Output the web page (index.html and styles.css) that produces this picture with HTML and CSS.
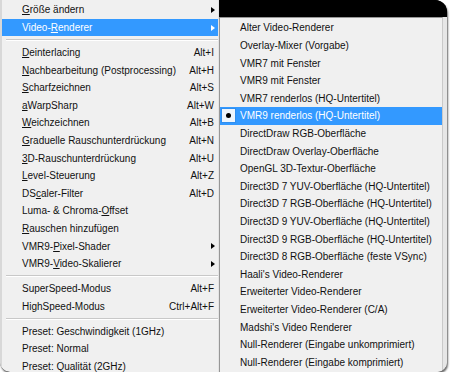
FILE: index.html
```html
<!DOCTYPE html>
<html lang="de">
<head>
<meta charset="utf-8">
<title>Menü</title>
<link rel="stylesheet" href="styles.css">
</head>
<body>
<div class="frame">
  <div class="menu">
    <div class="item"><span class="label"><u>G</u>röße ändern</span><span class="arrow"></span></div>
    <div class="item hl"><span class="label">Video-<u>R</u>enderer</span><span class="arrow"></span></div>
    <div class="sep"></div>
    <div class="item"><span class="label"><u>D</u>einterlacing</span><span class="key">Alt+I</span></div>
    <div class="item"><span class="label"><u>N</u>achbearbeitung (Postprocessing)</span><span class="key">Alt+H</span></div>
    <div class="item"><span class="label"><u>S</u>charfzeichnen</span><span class="key">Alt+S</span></div>
    <div class="item"><span class="label"><u>a</u>WarpSharp</span><span class="key">Alt+W</span></div>
    <div class="item"><span class="label"><u>W</u>eichzeichnen</span><span class="key">Alt+B</span></div>
    <div class="item"><span class="label"><u>G</u>raduelle Rauschunterdrückung</span><span class="key">Alt+N</span></div>
    <div class="item"><span class="label"><u>3</u>D-Rauschunterdrückung</span><span class="key">Alt+U</span></div>
    <div class="item"><span class="label"><u>L</u>evel-Steuerung</span><span class="key">Alt+Z</span></div>
    <div class="item"><span class="label">DS<u>c</u>aler-Filter</span><span class="key">Alt+D</span></div>
    <div class="item"><span class="label">Luma- &amp; Chroma-<u>O</u>ffset</span></div>
    <div class="item"><span class="label"><u>R</u>auschen hinzufügen</span></div>
    <div class="item"><span class="label">VMR9-<u>P</u>ixel-Shader</span><span class="arrow"></span></div>
    <div class="item"><span class="label">VMR9-<u>V</u>ideo-Skalierer</span><span class="arrow"></span></div>
    <div class="sep"></div>
    <div class="item"><span class="label">SuperSpeed-Modus</span><span class="key">Alt+F</span></div>
    <div class="item"><span class="label">HighSpeed-Modus</span><span class="key">Ctrl+Alt+F</span></div>
    <div class="sep"></div>
    <div class="item"><span class="label">Preset: Geschwindigkeit (1GHz)</span></div>
    <div class="item"><span class="label">Preset: Normal</span></div>
    <div class="item"><span class="label">Preset: Qualität (2GHz)</span></div>
  </div>
  <div class="side">
    <div class="backdrop"></div>
    <div class="subwrap">
      <div class="submenu">
        <div class="sitem"><span class="chk"></span><span>Alter Video-Renderer</span></div>
        <div class="sitem"><span class="chk"></span><span>Overlay-Mixer (Vorgabe)</span></div>
        <div class="sitem"><span class="chk"></span><span>VMR7 mit Fenster</span></div>
        <div class="sitem"><span class="chk"></span><span>VMR9 mit Fenster</span></div>
        <div class="sitem"><span class="chk"></span><span>VMR7 renderlos (HQ-Untertitel)</span></div>
        <div class="sitem hl"><span class="chk on"></span><span>VMR9 renderlos (HQ-Untertitel)</span></div>
        <div class="sitem"><span class="chk"></span><span>DirectDraw RGB-Oberfläche</span></div>
        <div class="sitem"><span class="chk"></span><span>DirectDraw Overlay-Oberfläche</span></div>
        <div class="sitem"><span class="chk"></span><span>OpenGL 3D-Textur-Oberfläche</span></div>
        <div class="sitem"><span class="chk"></span><span>Direct3D 7 YUV-Oberfläche (HQ-Untertitel)</span></div>
        <div class="sitem"><span class="chk"></span><span>Direct3D 7 RGB-Oberfläche (HQ-Untertitel)</span></div>
        <div class="sitem"><span class="chk"></span><span>Direct3D 9 YUV-Oberfläche (HQ-Untertitel)</span></div>
        <div class="sitem"><span class="chk"></span><span>Direct3D 9 RGB-Oberfläche (HQ-Untertitel)</span></div>
        <div class="sitem"><span class="chk"></span><span>Direct3D 8 RGB-Oberfläche (feste VSync)</span></div>
        <div class="sitem"><span class="chk"></span><span>Haali's Video-Renderer</span></div>
        <div class="sitem"><span class="chk"></span><span>Erweiterter Video-Renderer</span></div>
        <div class="sitem"><span class="chk"></span><span>Erweiterter Video-Renderer (C/A)</span></div>
        <div class="sitem"><span class="chk"></span><span>Madshi's Video Renderer</span></div>
        <div class="sitem"><span class="chk"></span><span>Null-Renderer (Eingabe unkomprimiert)</span></div>
        <div class="sitem"><span class="chk"></span><span>Null-Renderer (Eingabe komprimiert)</span></div>
      </div>
      <div class="edge"></div>
    </div>
  </div>
</div>
</body>
</html>
```
FILE: styles.css
```css
html, body {
  margin: 0;
  padding: 0;
  background: #ffffff;
}
body {
  font-family: "Liberation Sans", Arial, sans-serif;
  font-size: 10px;
  color: #111;
}
.frame {
  width: 447px;
  height: 372px;
  display: flex;
  overflow: hidden;
  background: #000;
  border-radius: 0 12px 10px 10px;
  box-shadow: 1px 2px 2px rgba(0, 0, 0, 0.6);
}
.menu {
  width: 219px;
  flex: none;
  box-sizing: border-box;
  background: #f0f0f0;
  border-left: 2px solid #d8d8d8;
  border-right: 1px solid #e4e4e4;
  padding-top: 1.2px;
}
.item {
  height: 17.6px;
  display: flex;
  align-items: center;
  padding: 0 4px 0 20px;
  white-space: nowrap;
}
.item .label {
  flex: 1;
}
.item .key {
  margin-left: 8px;
}
.arrow {
  width: 0;
  height: 0;
  margin-right: -1px;
  border-left: 4px solid #000;
  border-top: 3.5px solid transparent;
  border-bottom: 3.5px solid transparent;
}
.item.hl {
  background: #3399ff;
  color: #fff;
}
.item.hl .arrow {
  border-left-color: #fff;
}
.sep {
  height: 7.4px;
  display: flex;
  align-items: center;
  padding-left: 4px;
}
.sep::before {
  content: "";
  flex: 1;
  height: 0;
  border-top: 1px solid #c8c8c8;
  border-bottom: 1px solid #ffffff;
}
.side {
  flex: 1;
  display: flex;
  flex-direction: column;
  min-width: 0;
}
.backdrop {
  height: 17px;
  flex: none;
  background: #000;
}
.subwrap {
  flex: 1;
  display: flex;
  background: #ebebeb;
}
.submenu {
  flex: 1;
  background: #f0f0f0;
  border-left: 1px solid #979797;
  border-top: 1px solid #979797;
  border-right: 1px solid #c9c9c9;
  padding-top: 1.2px;
}
.edge {
  width: 4px;
  background: #e6e6e6;
}
.sitem {
  height: 17.6px;
  display: flex;
  align-items: center;
  padding-left: 1px;
  white-space: nowrap;
}
.chk {
  width: 15px;
  height: 15px;
  box-sizing: border-box;
  margin-right: 4px;
  flex: none;
  display: flex;
  align-items: center;
  justify-content: center;
}
.chk.on {
  background: #eef5fd;
  border: 1px solid #2f8ff0;
}
.chk.on::before {
  content: "";
  width: 5px;
  height: 5px;
  border-radius: 50%;
  background: #000;
}
.sitem.hl {
  background: #3399ff;
  color: #fff;
}
```
